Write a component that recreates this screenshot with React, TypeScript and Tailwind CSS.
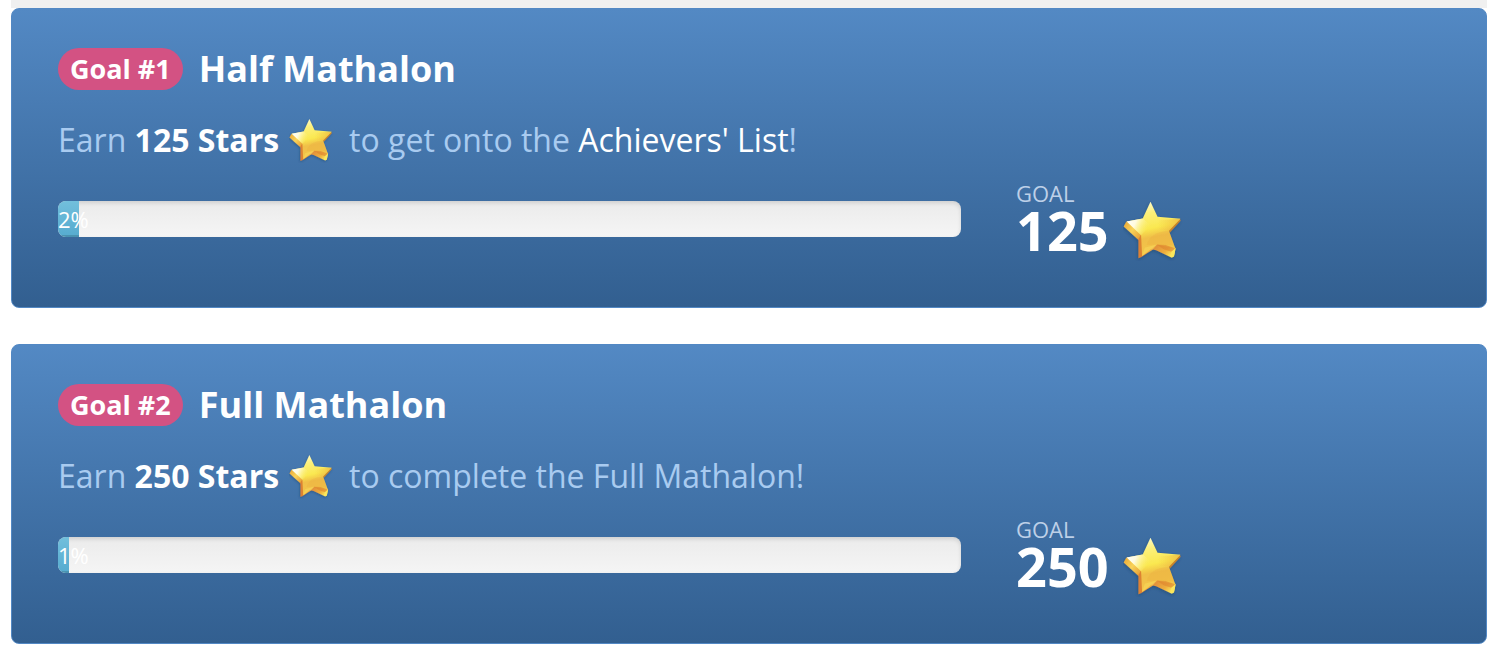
import clsx from "clsx";

type Goal = {
  id: number;
  title: string;
  stars: number;
  percent: number;
  before: string;
  highlight?: string;
  after?: string;
};

const goals: Goal[] = [
  { id: 1, title: "Half Mathalon", stars: 125, percent: 2.3, before: "to get onto the ", highlight: "Achievers' List", after: "!" },
  { id: 2, title: "Full Mathalon", stars: 250, percent: 1.2, before: "to complete the Full Mathalon!" },
];

function Star({ id, className }: { id: string; className?: string }) {
  return (
    <svg viewBox="25 13 185 185" aria-hidden="true" className={clsx("shrink-0", className)}>
      <defs>
        <linearGradient id={`${id}-face`} x1="0.3" y1="0" x2="0.5" y2="1">
          <stop offset="0" stopColor="#fffbd0" />
          <stop offset="0.22" stopColor="#fcf07a" />
          <stop offset="0.5" stopColor="#fae850" />
          <stop offset="0.66" stopColor="#f0bf48" />
          <stop offset="1" stopColor="#f3c648" />
        </linearGradient>
        <linearGradient id={`${id}-arm`} x1="0" y1="0" x2="1" y2="0.3">
          <stop offset="0" stopColor="#ffffff" />
          <stop offset="0.4" stopColor="#fffbe0" />
          <stop offset="1" stopColor="#fbed60" stopOpacity="0" />
        </linearGradient>
        <linearGradient id={`${id}-tip`} x1="0" y1="0.5" x2="1" y2="0.5">
          <stop offset="0" stopColor="#efb840" stopOpacity="0" />
          <stop offset="1" stopColor="#e9a83a" />
        </linearGradient>
        <linearGradient id={`${id}-left`} x1="0" y1="0" x2="1" y2="0.8">
          <stop offset="0" stopColor="#e9a535" />
          <stop offset="0.5" stopColor="#f9d359" />
          <stop offset="1" stopColor="#e59a32" />
        </linearGradient>
        <linearGradient id={`${id}-foot`} x1="0" y1="0" x2="1" y2="0.6">
          <stop offset="0" stopColor="#fbe56a" />
          <stop offset="0.3" stopColor="#e3923a" />
          <stop offset="0.7" stopColor="#eeae3c" />
          <stop offset="1" stopColor="#fbe75c" />
        </linearGradient>
        <filter id={`${id}-shadow`} x="-20%" y="-20%" width="140%" height="140%">
          <feDropShadow dx="-2" dy="4" stdDeviation="4" floodColor="#1d3552" floodOpacity="0.4" />
        </filter>
      </defs>
      <g filter={`url(#${id}-shadow)`}>
        <path d="M35 80L27 95L73 137L84 115Z" fill={`url(#${id}-left)`} />
        <path d="M80 118L71 132L71 190L80 186L116 162L96 130Z" fill="#dd8232" />
        <path d="M108 162L124 166L171 188L177 184L182 160L164 140L120 142Z" fill={`url(#${id}-foot)`} />
        <path d="M195 72L197 78L165 113L160 106Z" fill="#c98529" />
        <path d="M107 21L128 66L196 72L162 108L181 160L126 149L82 183L79 121L36 80L84 71Z" fill={`url(#${id}-face)`} />
        <path d="M36 80L84 71L108 92L79 121Z" fill={`url(#${id}-arm)`} />
        <path d="M128 76L196 72L162 108L130 104Z" fill={`url(#${id}-tip)`} opacity="0.6" />
        <path d="M96 150Q105 112 162 108L178 152L126 149Z" fill="#eaac40" opacity="0.3" />
        <path d="M126 149L152 150L180 160L174 172L146 163Z" fill="#dd842e" opacity="0.6" />
        <path d="M82 183L90 158L126 149L112 165Z" fill="#f9dc5c" opacity="0.5" />
        <path d="M170 170L182 160L177 185L166 182Z" fill="#fbe75c" />
      </g>
    </svg>
  );
}

function GoalCard({ goal }: { goal: Goal }) {
  return (
    <section className="rounded-lg border border-[#5288c4] bg-linear-to-b from-[#5389c4] to-[#325f90] px-[46px] pt-[39px] pb-[53px]">
      <div className="flex items-center gap-4">
        <span className="rounded-full bg-[#d35283] px-3 text-[27px] leading-[42px] font-bold">Goal #{goal.id}</span>
        <h2 className="text-4xl leading-[42px] font-bold">{goal.title}</h2>
      </div>

      <p className="mt-6 flex items-center text-[32px] leading-[52px] whitespace-pre text-[#a9cbf0]">
        <span>Earn </span>
        <strong className="font-bold text-white">{goal.stars} Stars</strong>
        <Star id={`star-sm-${goal.id}`} className="mr-3.5 ml-2.5 size-[46px]" />
        <span>
          {goal.before}
          {goal.highlight && <span className="text-white">{goal.highlight}</span>}
          {goal.after}
        </span>
      </p>

      <div className="mt-3.5 grid grid-cols-3 gap-x-[55px]">
        <div
          role="progressbar"
          aria-label={goal.title}
          aria-valuenow={goal.percent}
          className="col-span-2 mt-[21px] h-9 overflow-hidden rounded-lg bg-linear-to-b from-[#ebebeb] to-[#f5f5f5] shadow-[inset_0_2px_4px_rgba(0,0,0,0.12)]"
        >
          <div
            className="h-full bg-linear-to-b from-[#72bfdc] to-[#56abcf] text-[22px] leading-9 whitespace-nowrap shadow-[inset_0_-2px_0_rgba(0,0,0,0.15)]"
            style={{ width: `${goal.percent}%` }}
          >
            {Math.round(goal.percent)}%
          </div>
        </div>

        <div>
          <div className="text-[22px] leading-[26px] text-[#bdd0e8]">GOAL</div>
          <div className="flex h-12 items-center gap-3.5">
            <span className="text-[54px] leading-[48px] font-bold">{goal.stars}</span>
            <Star id={`star-lg-${goal.id}`} className="size-[62px]" />
          </div>
        </div>
      </div>
    </section>
  );
}

export default function App() {
  return (
    <main className="pr-[13px] pb-5 pl-[11px] font-['Open_Sans',sans-serif] text-white">
      <div className="h-2 bg-[#f0f0f0]" />
      <div className="flex flex-col gap-9">
        {goals.map((goal) => (
          <GoalCard key={goal.id} goal={goal} />
        ))}
      </div>
    </main>
  );
}
